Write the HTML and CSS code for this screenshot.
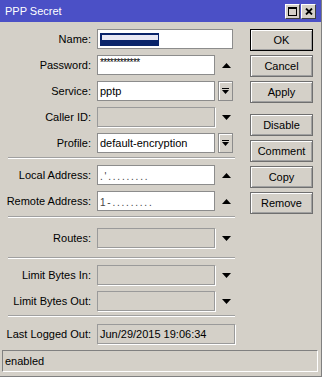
FILE: index.html
```html
<!DOCTYPE html>
<html>
<head>
<meta charset="utf-8">
<link rel="stylesheet" href="styles.css">
</head>
<body>
<div class="window">
  <div class="titlebar">
    <span class="title">PPP Secret</span>
    <div class="tbtns">
      <span class="tbtn"><svg width="9" height="9" viewBox="0 0 9 9"><rect x="0.5" y="0.5" width="8" height="8" fill="none" stroke="#000"/><rect x="0" y="0" width="9" height="2" fill="#000"/></svg></span>
      <span class="tbtn"><svg width="8" height="7" viewBox="0 0 8 7"><path d="M1 0.5L7 6.5M7 0.5L1 6.5" stroke="#000" stroke-width="1.8"/></svg></span>
    </div>
  </div>
  <div class="main">
    <div class="form">
      <div class="group g1">
        <div class="row"><span class="lbl">Name:</span><div class="field wide"><span class="sel"><span class="selfill"></span></span></div></div>
        <div class="row"><span class="lbl">Password:</span><div class="field"><span class="pw">************</span></div><span class="arrow"><svg width="9" height="5" viewBox="0 0 9 5"><path d="M0 5h9L4.5 0z"/></svg></span></div>
        <div class="row"><span class="lbl">Service:</span><div class="field">pptp</div><span class="dd"><svg width="7" height="7" viewBox="0 0 7 7"><rect width="7" height="1"/><path d="M0 2h7L3.5 6z"/></svg></span></div>
        <div class="row"><span class="lbl">Caller ID:</span><div class="field off"></div><span class="arrow"><svg width="9" height="5" viewBox="0 0 9 5"><path d="M0 0h9L4.5 5z"/></svg></span></div>
        <div class="row"><span class="lbl">Profile:</span><div class="field">default-encryption</div><span class="dd"><svg width="7" height="7" viewBox="0 0 7 7"><rect width="7" height="1"/><path d="M0 2h7L3.5 6z"/></svg></span></div>
      </div>
      <div class="sep s1"></div>
      <div class="group">
        <div class="row"><span class="lbl">Local Address:</span><div class="field"><span class="dots">. ' . . . . . . . . .</span></div><span class="arrow"><svg width="9" height="5" viewBox="0 0 9 5"><path d="M0 5h9L4.5 0z"/></svg></span></div>
        <div class="row"><span class="lbl">Remote Address:</span><div class="field"><span class="dots">1 -  . . . . . . . . .</span></div><span class="arrow"><svg width="9" height="5" viewBox="0 0 9 5"><path d="M0 5h9L4.5 0z"/></svg></span></div>
      </div>
      <div class="sep s2"></div>
      <div class="group">
        <div class="row"><span class="lbl">Routes:</span><div class="field off"></div><span class="arrow"><svg width="9" height="5" viewBox="0 0 9 5"><path d="M0 0h9L4.5 5z"/></svg></span></div>
      </div>
      <div class="sep s3"></div>
      <div class="group">
        <div class="row"><span class="lbl">Limit Bytes In:</span><div class="field off"></div><span class="arrow"><svg width="9" height="5" viewBox="0 0 9 5"><path d="M0 0h9L4.5 5z"/></svg></span></div>
        <div class="row"><span class="lbl">Limit Bytes Out:</span><div class="field off"></div><span class="arrow"><svg width="9" height="5" viewBox="0 0 9 5"><path d="M0 0h9L4.5 5z"/></svg></span></div>
      </div>
      <div class="sep s4"></div>
      <div class="group">
        <div class="row"><span class="lbl">Last Logged Out:</span><div class="field off wide last">Jun/29/2015 19:06:34</div></div>
      </div>
    </div>
    <div class="buttons">
      <div class="btn default">OK</div>
      <div class="btn">Cancel</div>
      <div class="btn">Apply</div>
      <div class="btn gap">Disable</div>
      <div class="btn">Comment</div>
      <div class="btn">Copy</div>
      <div class="btn">Remove</div>
    </div>
  </div>
  <div class="status">enabled</div>
</div>
</body>
</html>
```
FILE: styles.css
```css
html, body {
  margin: 0;
  padding: 0;
  background: #d4d0c8;
}
.window {
  width: 321px;
  height: 376px;
  background: #d4d0c8;
  border-right: 1px solid #808080;
  border-bottom: 1px solid #808080;
  display: flex;
  flex-direction: column;
  font-family: "Liberation Sans", Arial, sans-serif;
  font-size: 11px;
  color: #000;
}
.titlebar {
  height: 22px;
  flex: none;
  background: #4b50c6;
  color: #fff;
  display: flex;
  align-items: center;
  justify-content: space-between;
  padding: 0 5px 0 5px;
}
.title {
  font-size: 11px;
}
.tbtns {
  display: flex;
  gap: 1px;
}
.tbtn {
  width: 15px;
  height: 15px;
  box-sizing: border-box;
  background: #d4d0c8;
  border: 1px solid;
  border-color: #fff #404040 #404040 #fff;
  display: flex;
  align-items: center;
  justify-content: center;
}
.main {
  display: flex;
  padding-top: 7px;
  flex: 1;
}
.form {
  width: 235px;
}
.group {
  display: flex;
  flex-direction: column;
  gap: 6px;
}
.row {
  display: grid;
  grid-template-columns: 97px 118px 18px;
  height: 20px;
  align-items: center;
}
.lbl {
  padding-right: 6px;
  text-align: right;
  white-space: nowrap;
}
.field {
  height: 20px;
  box-sizing: border-box;
  border: 1px solid #8c8c8c;
  background: #fff;
  padding-left: 2px;
  display: flex;
  align-items: center;
  white-space: nowrap;
  overflow: hidden;
}
.field.off {
  background: #d4d0c8;
  border-color: #9a9a9a;
  box-shadow: 1px 1px 0 #fff;
}
.wide {
  grid-column: 2 / 4;
}
.last {
  margin-right: -2px;
}
.sel {
  display: flex;
  flex-direction: column;
  justify-content: flex-start;
  width: 59px;
  height: 13px;
  box-sizing: border-box;
  padding: 2px 0 0 2px;
  background: #0a246a;
}
.selfill {
  display: block;
  width: 56px;
  height: 5px;
  background: #e8e8f4;
}
.pw {
  letter-spacing: -0.6px;
  font-size: 10px;
  margin-top: -5px;
}
.dots {
  color: #444;
  font-size: 10px;
  letter-spacing: -0.5px;
  margin-top: 2px;
}
.arrow {
  display: flex;
  justify-content: center;
  padding-left: 4px;
}
.dd {
  margin-left: 3px;
  width: 15px;
  height: 20px;
  box-sizing: border-box;
  border: 1px solid #8c8c8c;
  background: #d4d0c8;
  box-shadow: inset 1px 1px #fff;
  display: flex;
  align-items: center;
  justify-content: center;
}
.sep {
  width: 227px;
  margin-left: 8px;
  border-top: 1px solid #a0a0a0;
  border-bottom: 1px solid #fff;
}
.s1 { margin-top: 4px; margin-bottom: 6px; }
.s2 { margin-top: 5px; margin-bottom: 10px; }
.s3 { margin-top: 9px; margin-bottom: 6px; }
.s4 { margin-top: 4px; margin-bottom: 7px; }
.buttons {
  margin-left: 15px;
  width: 63px;
  display: flex;
  flex-direction: column;
  gap: 4px;
}
.btn {
  height: 22px;
  box-sizing: border-box;
  border: 1px solid #6f6f6f;
  box-shadow: inset 1px 1px #fff, inset -1px -1px #a0a0a0;
  text-align: center;
  line-height: 20px;
}
.btn.default {
  border-color: #000;
}
.btn.gap {
  margin-top: 7px;
}
.status {
  flex: none;
  height: 22px;
  box-sizing: border-box;
  margin: 0 3px 4px 2px;
  border: 1px solid;
  border-color: #808080 #fff #fff #808080;
  padding-left: 2px;
  line-height: 20px;
}
```
